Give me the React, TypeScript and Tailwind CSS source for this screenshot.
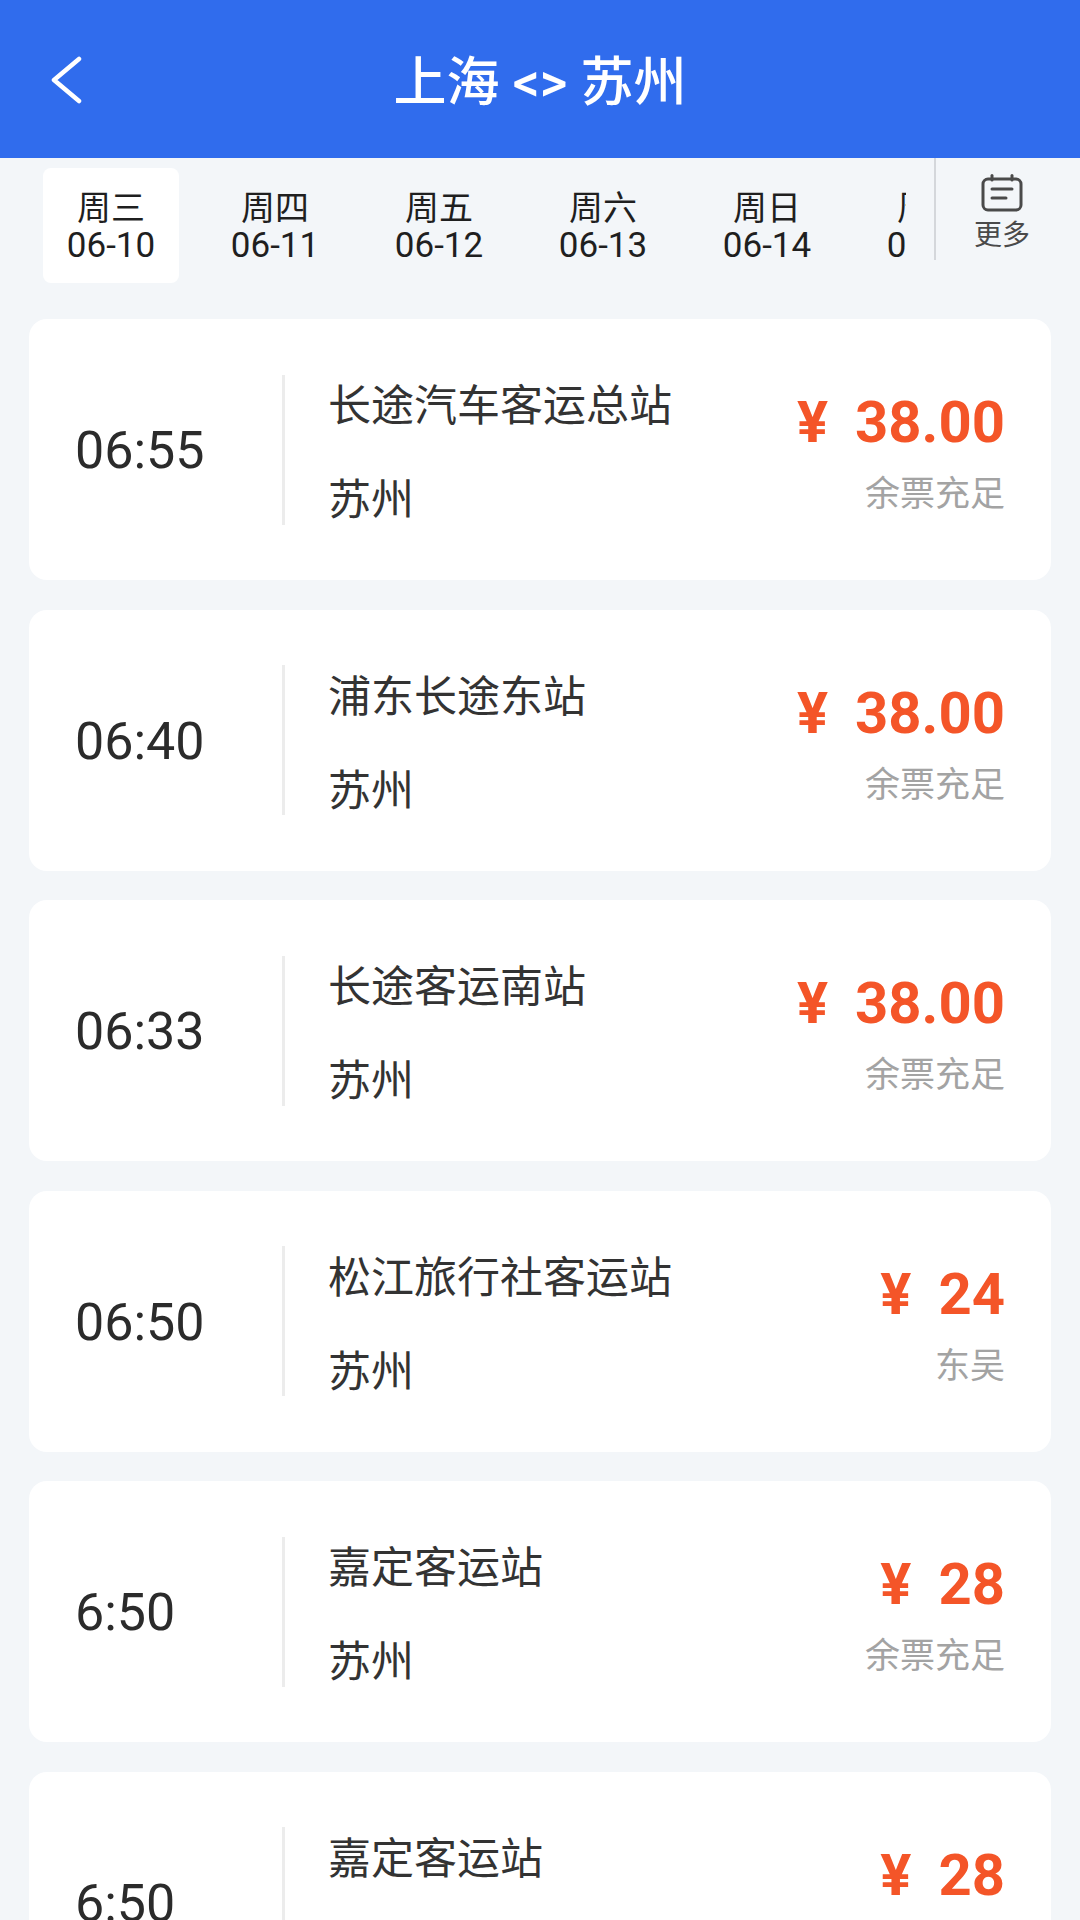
const cn = '"Roboto","Noto Sans CJK SC",sans-serif';

const tabs = [
  ["周三", "06-10"],
  ["周四", "06-11"],
  ["周五", "06-12"],
  ["周六", "06-13"],
  ["周日", "06-14"],
  ["周一", "06-15"],
];

const rows = [
  ["06:55", "长途汽车客运总站", "38.00", "余票充足"],
  ["06:40", "浦东长途东站", "38.00", "余票充足"],
  ["06:33", "长途客运南站", "38.00", "余票充足"],
  ["06:50", "松江旅行社客运站", "24", "东吴"],
  ["6:50", "嘉定客运站", "28", "余票充足"],
  ["6:50", "嘉定客运站", "28", "余票充足"],
];

export default function App() {
  return (
    <div
      className="h-[1920px] w-[1080px] overflow-hidden bg-[#f3f6f9]"
      style={{ fontFamily: cn }}
    >
      <header className="relative flex h-[158px] items-center justify-center bg-[#306ced] pt-[8px]">
        <svg
          className="absolute left-[50px] top-[56px]"
          width="32"
          height="48"
          viewBox="0 0 32 48"
          fill="none"
          stroke="white"
          strokeWidth="4.5"
          strokeLinecap="round"
          strokeLinejoin="round"
        >
          <polyline points="29,3 4,24 29,45" />
        </svg>
        <h1 className="text-[53px] font-medium leading-none text-white">上海 &lt;&gt; 苏州</h1>
      </header>

      <nav className="flex h-[161px] items-start pl-[29px]">
        <div className="mt-[10px] flex w-[877px] overflow-hidden">
          {tabs.map(([d, n], i) => (
            <div key={i} className="flex h-[115px] w-[164px] shrink-0 flex-col items-center justify-center">
              <div
                className={`flex h-[115px] w-[136px] flex-col items-center justify-center rounded-[8px] pt-[3px] text-[#1f1f1f] ${i === 0 ? "bg-white" : ""}`}
              >
                <span className="text-[34px] leading-[37px]">{d}</span>
                <span className="text-[35px] leading-[37px]">{n}</span>
              </div>
            </div>
          ))}
        </div>
        <div className="ml-[28px] flex h-[102px] w-[134px] flex-col items-center border-l-2 border-[#d4d7db] pt-[16px]">
          <svg width="42" height="38" viewBox="0 0 42 38" fill="none" stroke="#4a4a4a" strokeWidth="3" strokeLinecap="round">
            <rect x="2" y="5" width="38" height="31" rx="5" />
            <line x1="11" y1="1.5" x2="11" y2="6" />
            <line x1="31" y1="1.5" x2="31" y2="6" />
            <line x1="11" y1="15" x2="31" y2="15" />
            <line x1="11" y1="24" x2="25" y2="24" />
          </svg>
          <span className="mt-[9px] text-[28px] leading-[30px] text-[#4a4a4a]">更多</span>
        </div>
      </nav>

      <main className="flex flex-col gap-[29.5px] px-[29px]">
        {rows.map(([t, s, p, sub], i) => (
          <section key={i} className="flex h-[261px] w-[1022px] shrink-0 items-center rounded-[18px] bg-white">
            <div className="w-[253px] pl-[46px] pt-[3px] text-[52px] leading-none text-[#2b2b2b]">{t}</div>
            <div className="h-[150px] w-[3px] bg-[#ececec]" />
            <div className="ml-[43px] flex flex-1 flex-col gap-[42px] pt-[7px] text-[#333333]">
              <span className="text-[43px] leading-[52px]">{s}</span>
              <span className="text-[43px] leading-[52px]">苏州</span>
            </div>
            <div className="flex flex-col items-end pr-[46px] pt-[10px]">
              <div className="flex items-center gap-[27px] text-[58px] font-bold leading-[60px] text-[#f45528]">
                <span>¥</span>
                <span>{p}</span>
              </div>
              <span className="mt-[21px] text-[35px] leading-[44px] text-[#a3a3a3]">{sub}</span>
            </div>
          </section>
        ))}
      </main>
    </div>
  );
}
